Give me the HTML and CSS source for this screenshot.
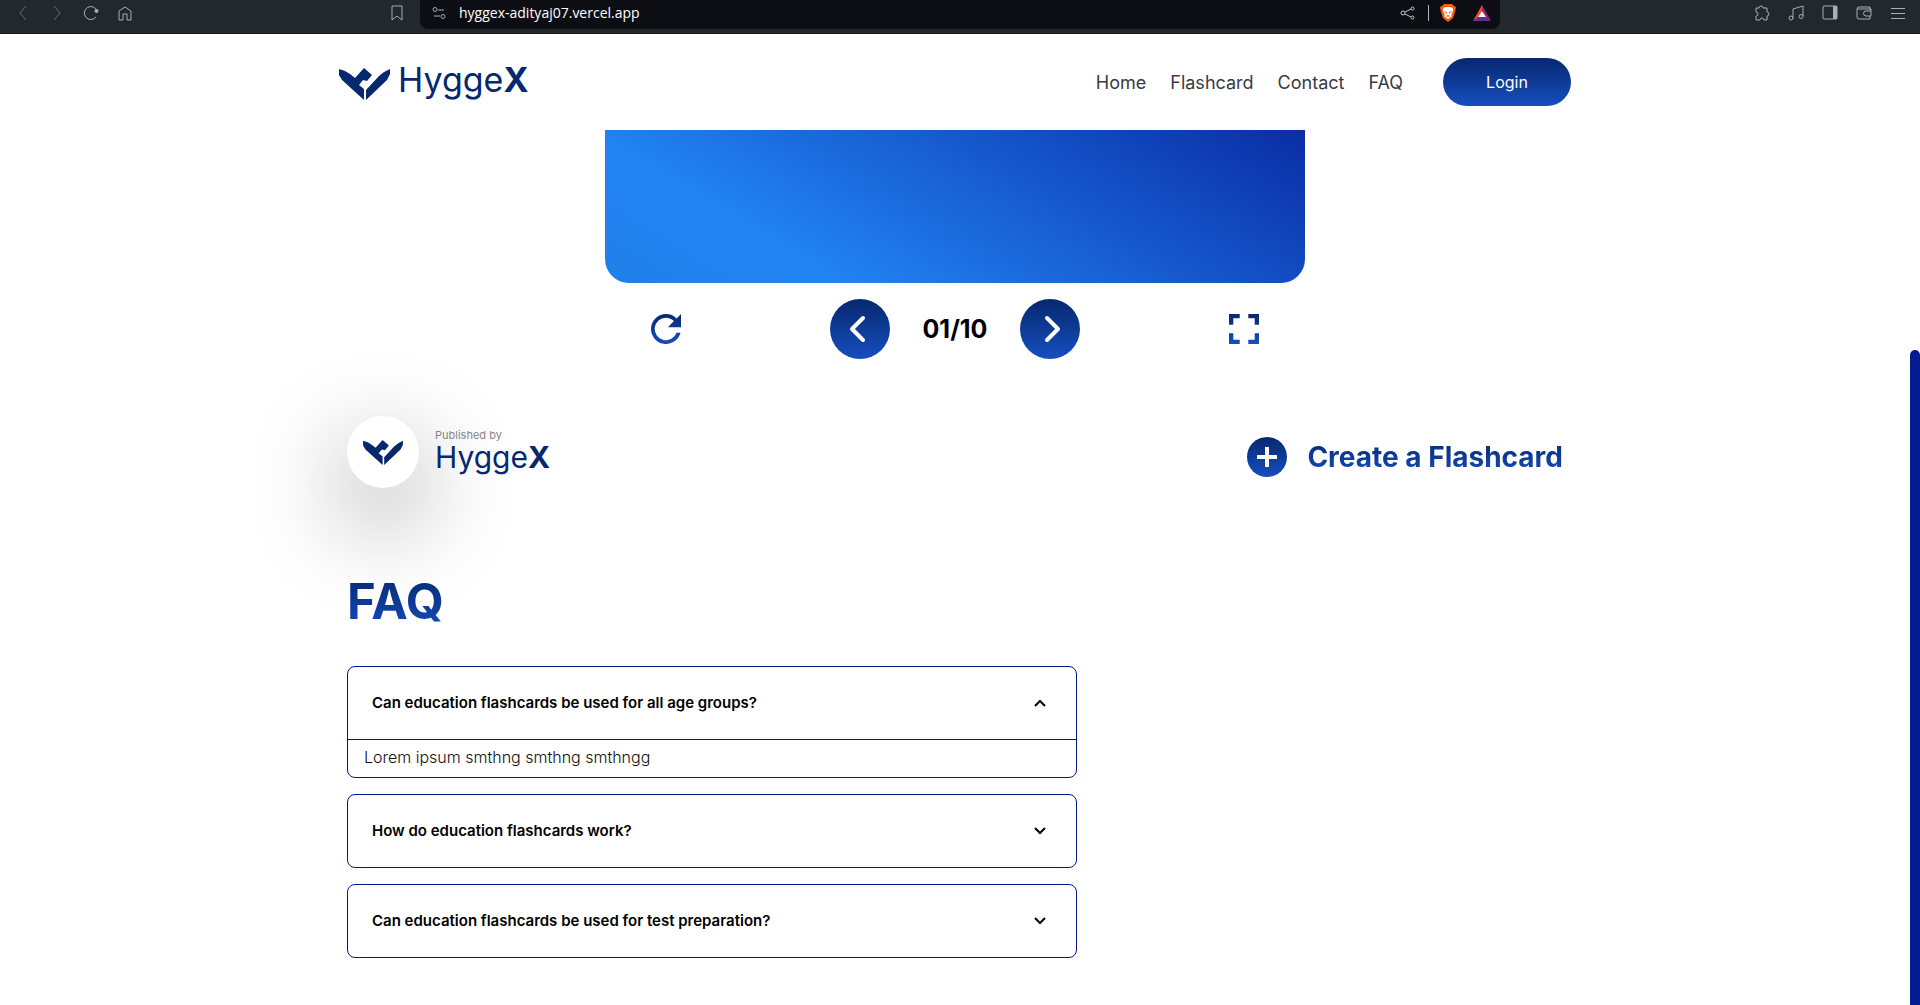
FILE: index.html
```html
<!DOCTYPE html>
<html lang="en">
<head>
<meta charset="utf-8">
<title>HyggeX Flashcards</title>
<link rel="stylesheet" href="styles.css">
</head>
<body>
<svg class="defs" aria-hidden="true">
  <defs>
    <linearGradient id="blue" x1="0" y1="0" x2="0" y2="1"><stop offset="0" stop-color="#06286e"/><stop offset="1" stop-color="#164ec0"/></linearGradient>
    <symbol id="mark" viewBox="0 0 51 32"><path fill="#06286e" d="M0 1L6 3L11 6L16 10L25 0L33 7L28 13L24 12L20 17L25 21V32L3 12L0 7ZM51 1V6L48 12L27 32V22L40 8L45 4Z"/></symbol>
    <symbol id="down" viewBox="0 0 12 8"><path d="M1 1l5 5 5-5" fill="none" stroke="#000" stroke-width="2"/></symbol>
  </defs>
</svg>
<div class="browser">
  <div class="tools">
    <button class="tool dim" aria-label="Back"><svg width="16" height="16"><path d="M11 1L5 8l6 7"/></svg></button>
    <button class="tool dim" aria-label="Forward"><svg width="16" height="16"><path d="M5 1l6 7-6 7"/></svg></button>
    <button class="tool" aria-label="Reload"><svg width="16" height="16"><path d="M13 12a6.500 6.500 0 1 1 1-6"/><circle cx="13.500" cy="6" r="2" fill="#9fb1bb" stroke="none"/></svg></button>
    <button class="tool" aria-label="Home"><svg width="16" height="16"><path d="M2 15V6l6-4 6 4v9h-4V9H6v6z"/></svg></button>
    <button class="tool bookmark" aria-label="Bookmark"><svg width="16" height="16"><path d="M3 1h10v14l-5-4-5 4z"/></svg></button>
  </div>
  <div class="address">
    <svg width="14" height="14"><circle cx="3" cy="3.500" r="2"/><path d="M6 4h6M2 10h6"/><circle cx="11" cy="10.500" r="2"/></svg>
    <input class="url" aria-label="Address" value="hyggex-adityaj07.vercel.app">
    <button class="tool pale" aria-label="Share"><svg width="16" height="16"><circle cx="3" cy="8" r="2"/><circle cx="12.500" cy="3.500" r="1.500"/><circle cx="12.500" cy="12.500" r="1.500"/><path d="M5 7l6-3M5 9l6 3"/></svg></button>
    <span class="divider"></span>
    <button class="tool" aria-label="Shields"><svg width="16" height="18"><path fill="#fb5a12" stroke="none" d="M4 0h8l2 2 2 1-1 5-2 6-5 4-5-4-2-6-1-5 2-1z"/><path fill="#fff" stroke="none" d="M3 4l3-1h4l3 1v3l-2 4 1 1-4 3-4-3 1-1-2-4z"/><path fill="#fb5a12" stroke="none" d="M4 7l3 1v2zM12 7L9 8v2zM6 12l2-1 2 1-2 1z"/></svg></button>
    <button class="tool" aria-label="Rewards"><svg width="18" height="16"><path fill="#ff4724" stroke="none" d="M9 0v6l-4 7-5 3z"/><path fill="#9e1f63" stroke="none" d="M9 0l9 16-5-3-4-7z"/><path fill="#662d91" stroke="none" d="M0 16l5-4h8l5 4z"/><path fill="#fff" stroke="none" d="M9 6l4 6H5z"/></svg></button>
  </div>
  <div class="tools right">
    <button class="tool" aria-label="Extensions"><svg width="16" height="16"><path d="M2 3h3a2 2 0 0 1 4 0h4v4a2 2 0 0 1 0 4v4h-3a2 2 0 0 0-4 0H2v-4a2 2 0 0 0 0-4z"/></svg></button>
    <button class="tool" aria-label="Media"><svg width="16" height="16"><path d="M5 13V4l10-3v10"/><circle cx="3" cy="13" r="2"/><circle cx="13" cy="11.500" r="2"/></svg></button>
    <button class="tool" aria-label="Sidebar"><svg width="16" height="16"><rect x="1" y="1" width="14" height="13" rx="1"/><path fill="#9fb1bb" stroke="none" d="M11 1h4v13h-4z"/></svg></button>
    <button class="tool" aria-label="Wallet"><svg width="16" height="16"><path d="M14 5V2H3a2 2 0 0 0-2 2v8a2 2 0 0 0 2 2h11v-3M1 4h14v7H10a2 2 0 0 1 0-5h5"/></svg></button>
    <button class="tool" aria-label="Menu"><svg width="16" height="16"><path d="M1 3.500h14M1 8.500h14M1 13.500h14"/></svg></button>
  </div>
</div>
<div class="viewport">
  <div class="page">
    <header class="header">
      <a class="logo" href="#home"><svg class="logo-mark"><use href="#mark"/></svg><span class="word">Hygge<b>X</b></span></a>
      <nav class="nav">
        <a href="#home">Home</a><a href="#flashcard">Flashcard</a><a href="#contact">Contact</a><a href="#faq">FAQ</a>
        <button class="login">Login</button>
      </nav>
    </header>
    <main>
      <section class="deck">
        <div class="card"></div>
        <div class="controls">
          <button class="plain" aria-label="Restart"><svg width="30" height="30" viewBox="4 4 16 16"><path fill="url(#blue)" d="M17.650 6.350A7.960 7.960 0 0 0 12 4a8 8 0 1 0 7.730 10h-2.080A6 6 0 1 1 12 6c1.660 0 3.140.69 4.220 1.780L13 11h7V4z"/></svg></button>
          <div class="pager">
            <button class="round" aria-label="Previous"><svg width="24" height="28"><path d="M15 3L4 14l11 11"/></svg></button>
            <span class="count">01/10</span>
            <button class="round" aria-label="Next"><svg width="24" height="28"><path d="M9 3l11 11L9 25"/></svg></button>
          </div>
          <button class="plain" aria-label="Full screen"><svg width="30" height="30" viewBox="5 5 14 14"><path fill="url(#blue)" d="M7 14H5v5h5v-2H7zM5 10h2V7h3V5H5zm12 7h-3v2h5v-5h-2zM14 5v2h3v3h2V5z"/></svg></button>
        </div>
      </section>
      <section class="meta">
        <div class="publisher">
          <div class="avatar"><svg><use href="#mark"/></svg></div>
          <div class="by"><small>Published by</small><span class="word small">Hygge<b>X</b></span></div>
        </div>
        <button class="create"><svg width="40" height="40"><circle cx="20" cy="20" r="20" fill="url(#blue)"/><path d="M20 10v20M10 20h20" stroke="#fff" stroke-width="4"/></svg><span class="fade">Create a Flashcard</span></button>
      </section>
      <section class="faq" id="faq">
        <h2 class="fade">FAQ</h2>
        <div class="list">
          <article class="item"><button class="question" aria-expanded="true">Can education flashcards be used for all age groups?<svg class="chevron up"><use href="#down"/></svg></button><p class="answer">Lorem ipsum smthng smthng smthngg</p></article>
          <article class="item"><button class="question" aria-expanded="false">How do education flashcards work?<svg class="chevron"><use href="#down"/></svg></button></article>
          <article class="item"><button class="question" aria-expanded="false">Can education flashcards be used for test preparation?<svg class="chevron"><use href="#down"/></svg></button></article>
        </div>
      </section>
    </main>
  </div>
  <div class="track"><div class="thumb"></div></div>
</div>
</body>
</html>
```
FILE: styles.css
```css
* { box-sizing: border-box; }
body { margin: 0; min-height: 100vh; display: flex; flex-direction: column; background: #fff; font-family: Inter, "Liberation Sans", sans-serif; color: #000; }
button { font: inherit; color: inherit; background: none; border: 0; padding: 0; cursor: pointer; }
a { color: inherit; text-decoration: none; }
svg { display: block; flex: none; }
.defs { position: absolute; width: 0; height: 0; }

/* browser bar */
.browser { height: 34px; display: grid; grid-template-columns: 420px 1fr 420px; background: #23282c; border-bottom: 1px solid #15171c; }
.tools { display: flex; align-items: center; height: 26px; padding: 0 6px; }
.tools.right { justify-content: flex-end; padding-right: 5px; }
.tool { width: 34px; height: 26px; display: flex; align-items: center; justify-content: center; }
.browser svg { fill: none; stroke: #9fb1bb; stroke-width: 1; }
.browser .pale svg { stroke: #c4c6ca; }
.dim { opacity: .5; }
.bookmark { margin-left: auto; }
.address { height: 29px; padding: 0 1px 3px 12px; display: flex; align-items: center; background: #0d0e13; border-radius: 0 0 8px 8px; }
.url { flex: 1; margin-left: 13px; padding: 0; border: 0; background: none; color: #fff; font: 14px/20px "Open Sans", "Noto Sans", sans-serif; outline: 0; }
.divider { width: 1px; height: 16px; margin: 0 2px 0 3px; background: #b4b6ba; }

/* page */
.viewport { flex: 1; display: grid; grid-template-columns: 1fr 10px; }
.track { display: grid; grid-template-rows: 316fr 655fr; }
.thumb { grid-row: 2; background: #041c91; border-radius: 5px 5px 0 0; }
.header { max-width: 1232px; height: 96px; margin: 0 auto; display: flex; align-items: center; justify-content: space-between; }
.logo { display: flex; align-items: flex-end; gap: 8px; padding-bottom: 4px; }
.logo-mark { width: 51px; height: 32px; }
.word { color: #06286e; font-size: 34px; line-height: 40px; }
.word.small { font-size: 30px; line-height: 32px; }
.nav { display: flex; align-items: center; gap: 24px; color: #3a3a42; font-size: 18px; }
.login { width: 128px; height: 48px; margin-left: 16px; border-radius: 24px; color: #fff; font-size: 16px; background: linear-gradient(#06286e, #164ec0); }
main { max-width: 1216px; margin: 0 auto; }
.deck { max-width: 700px; margin: 0 auto; }
.card { height: 153px; border-radius: 0 0 24px 24px; background: linear-gradient(31deg, #2080ea, #2284f3 24%, #134dc3 72%, #0a2da4); }
.controls { display: flex; align-items: center; justify-content: space-between; padding: 16px 46px 0; }
.pager { display: flex; align-items: center; gap: 32px; }
.round { width: 60px; height: 60px; border-radius: 50%; background: linear-gradient(#06286e, #164ec0); display: flex; align-items: center; justify-content: center; }
.round path { fill: none; stroke: #fff; stroke-width: 4; stroke-linecap: round; stroke-linejoin: round; }
.count { min-width: 66px; text-align: center; font-size: 25px; font-weight: 700; }
.meta { display: flex; align-items: center; justify-content: space-between; margin-top: 57px; }
.publisher { display: flex; align-items: center; gap: 16px; }
.avatar { width: 72px; height: 72px; border-radius: 50%; background: #fff; display: grid; place-items: center; box-shadow: 0 32px 96px rgba(0, 0, 0, .45); }
.avatar svg { width: 40px; height: 25px; }
.by { display: flex; flex-direction: column; padding-bottom: 2px; }
.by small { font-size: 11px; line-height: 12px; color: #85858c; }
.create { display: flex; align-items: center; gap: 20px; font-size: 28px; line-height: 40px; font-weight: 700; margin-top: 10px; }
.fade { color: transparent; background: linear-gradient(#06286e, #164ec0); background-clip: text; -webkit-background-clip: text; }
.faq { max-width: 730px; margin-top: 82px; padding-bottom: 40px; }
h2 { width: fit-content; margin: 0 0 32px; font-size: 49px; line-height: 64px; }
.list { display: grid; gap: 16px; }
.item { border: 1px solid #06168b; border-radius: 8px; }
.question { width: 100%; height: 72px; padding: 0 30px 1px 24px; display: flex; align-items: center; justify-content: space-between; font-size: 15px; font-weight: 600; }
.chevron { width: 12px; height: 8px; }
.up { transform: rotate(180deg); }
.answer { margin: 0; padding: 5px 16px 8px; border-top: 1px solid #06168b; font-size: 16px; font-weight: 300; line-height: 24px; color: #111; }
```
